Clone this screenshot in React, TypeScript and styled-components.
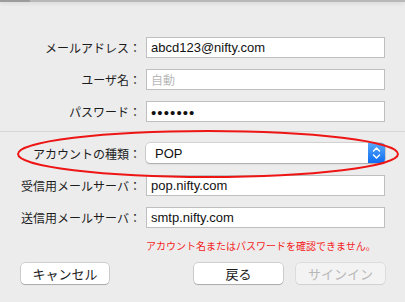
import React from "react";
import styled, { createGlobalStyle } from "styled-components";

const GlobalStyle = createGlobalStyle`
  html, body {
    margin: 0;
    padding: 0;
    background: #ececec;
  }
  body {
    font-family: "Liberation Sans", "Noto Sans CJK JP", sans-serif;
    color: #1a1a1a;
  }
`;

interface Field {
  label: string;
  value: string;
  placeholder?: boolean;
  secret?: boolean;
}

const accountFields: Field[] = [
  { label: "メールアドレス：", value: "abcd123@nifty.com" },
  { label: "ユーザ名：", value: "自動", placeholder: true },
  { label: "パスワード：", value: "•••••••", secret: true },
];

const serverFields: Field[] = [
  { label: "受信用メールサーバ：", value: "pop.nifty.com" },
  { label: "送信用メールサーバ：", value: "smtp.nifty.com" },
];

function FieldRow(props: { field: Field }): JSX.Element {
  const { field } = props;
  return (
    <>
      <Label>{field.label}</Label>
      <TextField $placeholder={field.placeholder} $secret={field.secret}>
        {field.value}
      </TextField>
    </>
  );
}

function Stepper(): JSX.Element {
  return (
    <StepperBox>
      <svg width="17" height="20" viewBox="0 0 17 20">
        <path d="M5.5 8 L8.5 5 L11.5 8" fill="none" stroke="#fff" strokeWidth="1.5" strokeLinecap="round" strokeLinejoin="round" />
        <path d="M5.5 12 L8.5 15 L11.5 12" fill="none" stroke="#fff" strokeWidth="1.5" strokeLinecap="round" strokeLinejoin="round" />
      </svg>
    </StepperBox>
  );
}

export default function App(): JSX.Element {
  return (
    <Window>
      <GlobalStyle />
      <TitleEdge />
      <Form>
        <FieldGrid>
          {accountFields.map(f => <FieldRow key={f.label} field={f} />)}
        </FieldGrid>
        <Divider />
        <FieldGrid $top={11}>
          <Label>アカウントの種類：</Label>
          <Select>
            <span>POP</span>
            <Stepper />
          </Select>
          {serverFields.map(f => <FieldRow key={f.label} field={f} />)}
          <span />
          <ErrorText>アカウント名またはパスワードを確認できません。</ErrorText>
        </FieldGrid>
        <ButtonBar>
          <PushButton $w={88}>キャンセル</PushButton>
          <ButtonGroup>
            <PushButton>戻る</PushButton>
            <PushButton disabled>サインイン</PushButton>
          </ButtonGroup>
        </ButtonBar>
      </Form>
      <Annotation width="386" height="52" viewBox="0 0 386 52">
        <ellipse cx="192" cy="25" rx="190" ry="23" fill="none" stroke="#ee1515" strokeWidth="2" />
      </Annotation>
    </Window>
  );
}

const Window = styled.div`
  position: relative;
  width: 405px;
  height: 302px;
  overflow: hidden;
  background: #ececec;
`;

const TitleEdge = styled.div`
  height: 2px;
  background: linear-gradient(to right, #9c9c9c 30px, #b8b8b8 30px);
  box-shadow: 0 1px 4px rgba(0, 0, 0, 0.14);
`;

const Form = styled.div`
  padding-top: 35px;
`;

const FieldGrid = styled.div<{ $top?: number }>`
  display: grid;
  grid-template-columns: 141px 239px;
  column-gap: 5px;
  row-gap: 11px;
  margin-top: ${p => p.$top ?? 0}px;
`;

const Label = styled.div`
  height: 21px;
  display: flex;
  align-items: center;
  justify-content: flex-end;
  font-family: "Noto Sans CJK JP", sans-serif;
  font-size: 12px;
  color: #1c1c1c;
  white-space: nowrap;
`;

const TextField = styled.div<{ $placeholder?: boolean; $secret?: boolean }>`
  box-sizing: border-box;
  height: 21px;
  display: flex;
  align-items: center;
  padding-left: 4px;
  background: #fff;
  border: 1px solid #bfbfbf;
  font-family: ${p => (p.$placeholder ? `"Noto Sans CJK JP", sans-serif` : `"Liberation Sans", "Noto Sans CJK JP", sans-serif`)};
  font-size: ${p => (p.$secret ? 15 : p.$placeholder ? 12 : 13)}px;
  letter-spacing: ${p => (p.$secret ? 1.1 : 0)}px;
  color: ${p => (p.$placeholder ? "#b9b9b9" : "#111")};
  line-height: 1;
  padding-top: ${p => (p.$secret ? 2 : 0)}px;
`;

const Divider = styled.div`
  height: 1px;
  margin-top: 9px;
  background: #d6d6d6;
`;

const Select = styled.div`
  box-sizing: border-box;
  height: 20px;
  display: flex;
  align-items: center;
  justify-content: space-between;
  padding-left: 9px;
  background: #fff;
  border-radius: 4px;
  box-shadow: 0 0 0 0.5px rgba(0, 0, 0, 0.22), 0 1px 1.5px rgba(0, 0, 0, 0.2);
  font-size: 13px;
  color: #111;
`;

const StepperBox = styled.div`
  width: 17px;
  height: 20px;
  border-radius: 0 4px 4px 0;
  background: linear-gradient(to bottom, #5aa9fd, #0d6cf2);
  svg {
    display: block;
  }
`;

const ErrorText = styled.div`
  height: 12px;
  display: flex;
  align-items: center;
  font-family: "Noto Sans CJK JP", sans-serif;
  font-size: 10px;
  color: #f41d1d;
  white-space: nowrap;
`;

const ButtonBar = styled.div`
  display: flex;
  justify-content: space-between;
  width: 364px;
  margin: 12px 0 0 21px;
`;

const ButtonGroup = styled.div`
  display: flex;
  gap: 13px;
`;

const PushButton = styled.button<{ $w?: number }>`
  box-sizing: border-box;
  width: ${p => p.$w ?? 89}px;
  height: 21px;
  padding: 0;
  border: none;
  border-radius: 4px;
  background: #fff;
  box-shadow: 0 0 0 0.5px rgba(0, 0, 0, 0.25), 0 1px 1px rgba(0, 0, 0, 0.18);
  font-family: "Noto Sans CJK JP", sans-serif;
  font-size: 13px;
  color: #1a1a1a;

  &:disabled {
    background: #f3f3f3;
    color: #b8b8b8;
    box-shadow: 0 0 0 0.5px rgba(0, 0, 0, 0.13), 0 1px 1px rgba(0, 0, 0, 0.06);
  }
`;

const Annotation = styled.svg`
  position: absolute;
  left: 16px;
  top: 129px;
  pointer-events: none;
`;
